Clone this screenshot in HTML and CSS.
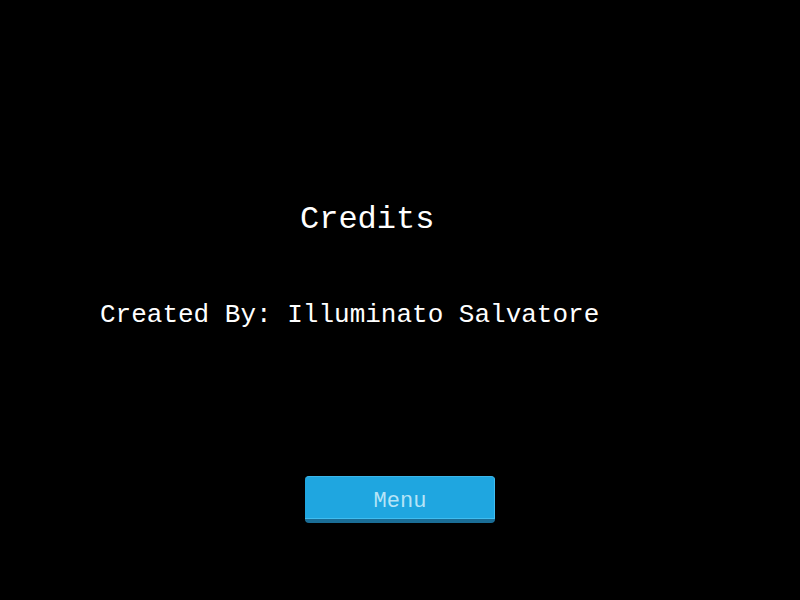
FILE: index.html
```html
<!DOCTYPE html>
<html>
<head>
<meta charset="utf-8">
<link rel="stylesheet" href="styles.css">
</head>
<body>
<main class="screen">
  <h1 class="title">Credits</h1>
  <p class="credit">Created By: Illuminato Salvatore</p>
  <button class="menu-btn"><span class="menu-label">Menu</span></button>
</main>
</body>
</html>
```

FILE: styles.css
```css
html, body {
  margin: 0;
  padding: 0;
  background: #000;
}
.screen {
  width: 800px;
  height: 600px;
  box-sizing: border-box;
  padding-top: 204px;
  display: flex;
  flex-direction: column;
  align-items: flex-start;
  font-family: "Courier New", "Nimbus Mono PS", "Liberation Mono", monospace;
  color: #fff;
}
.title {
  margin: 0 0 0 300px;
  font-size: 32px;
  font-weight: normal;
  line-height: 32px;
}
.credit {
  margin: 66px 0 0 100px;
  font-size: 26px;
  line-height: 26px;
}
.menu-btn {
  margin: 148px 0 0 305px;
  width: 190px;
  height: 47px;
  box-sizing: border-box;
  padding: 8px 0 0 0;
  border: none;
  border-top: 1px solid #3bb6ea;
  border-bottom: 4px solid #1a6d96;
  border-radius: 4px;
  background: #1fa6e0;
  box-shadow: inset -1px -1px 0 #40bdf0;
  font-family: inherit;
  font-size: 22px;
  color: #b6e4f7;
  display: flex;
  align-items: center;
  justify-content: center;
}
.menu-label {
  line-height: 22px;
}
```
